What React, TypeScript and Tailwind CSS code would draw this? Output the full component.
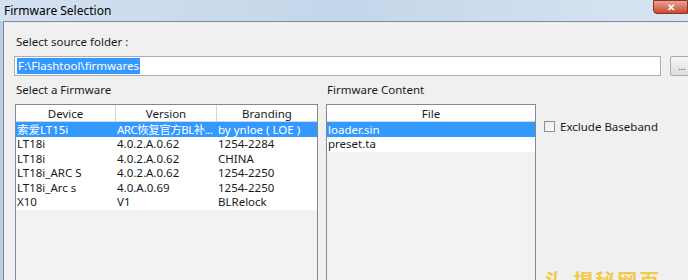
import React from "react";

const firmwares = [
  { device: "索爱LT15i", version: "ARC恢复官方BL补...", branding: "by ynloe ( LOE )" },
  { device: "LT18i", version: "4.0.2.A.0.62", branding: "1254-2284" },
  { device: "LT18i", version: "4.0.2.A.0.62", branding: "CHINA" },
  { device: "LT18i_ARC S", version: "4.0.2.A.0.62", branding: "1254-2250" },
  { device: "LT18i_Arc s", version: "4.0.A.0.69", branding: "1254-2250" },
  { device: "X10", version: "V1", branding: "BLRelock" },
];

const files = ["loader.sin", "preset.ta"];

export default function App() {
  return (
    <div
      className="relative w-[688px] h-[280px] overflow-hidden bg-[#f0f0f0] text-[11.5px] text-[#1a1a1a]"
      style={{ fontFamily: '"Noto Sans", "Noto Sans CJK SC", sans-serif' }}
    >
      {/* Title bar */}
      <div className="h-[21px] flex items-center pl-[4px] bg-gradient-to-r from-[#d3e1f0] via-[#c4d6ea] to-[#d8e5f2] text-[12px] text-black">
        Firmware Selection
      </div>
      <div className="absolute right-0 top-0 w-[35px] h-[14px] rounded-bl-[4px] bg-gradient-to-b from-[#e8a294] to-[#c9462e] border border-[#8d3324] flex items-center justify-center text-white text-[10px] font-bold leading-none">
        ✕
      </div>

      {/* Body */}
      <div className="flex h-[259px]">
        <div className="w-[3px] shrink-0 bg-[#b9cde3]" />
        <div className="flex-1 min-w-0 overflow-hidden border-l border-t border-[#7d8895] bg-[#f0f0f0] pt-[12px]">
          <div className="pl-[12px] h-[16px] leading-[16px]">Select source folder :</div>

          <div className="flex items-center mt-[6px]">
            <div className="ml-[10px] w-[647px] shrink-0 h-[20px] border border-[#abadb3] bg-white flex items-center pl-[2px]">
              <span className="bg-[#3399ff] text-white h-[16px] leading-[16px] px-[1px]">
                F:\Flashtool\firmwares
              </span>
            </div>
            <div className="ml-[9px] w-[24px] shrink-0 h-[20px] border border-[#acacac] rounded-[2px] bg-gradient-to-b from-[#f6f6f6] to-[#dddddd] flex items-center justify-center text-[9px] text-[#444] leading-none">
              ...
            </div>
          </div>

          <div className="flex mt-[6px]">
            {/* Left list */}
            <div className="ml-[11px] w-[303px] shrink-0">
              <div className="pl-[1px] h-[16px] leading-[16px]">Select a Firmware</div>
              <div className="mt-[6px] h-[200px] border border-[#828790] bg-[#f2f2f2]">
                <div className="flex h-[17px] bg-white border-b border-[#d5d5d5]">
                  <div className="w-[100px] border-r border-[#d5d5d5] text-center leading-[17px]">Device</div>
                  <div className="w-[101px] border-r border-[#d5d5d5] text-center leading-[17px]">Version</div>
                  <div className="flex-1 text-center leading-[17px]">Branding</div>
                </div>
                {firmwares.map((f, i) => (
                  <div
                    key={i}
                    className={
                      i === 0
                        ? "flex h-[15px] leading-[15px] bg-[#3399ff] text-white"
                        : "flex h-[14.5px] leading-[14.5px] bg-white"
                    }
                  >
                    <div className="w-[100px] pl-[1px] whitespace-nowrap overflow-hidden">{f.device}</div>
                    <div
                      className={
                        i === 0
                          ? "w-[101px] pl-[1px] whitespace-nowrap overflow-hidden tracking-[-0.5px]"
                          : "w-[101px] pl-[1px] whitespace-nowrap overflow-hidden"
                      }
                    >
                      {f.version}
                    </div>
                    <div className="flex-1 pl-[1px] whitespace-nowrap overflow-hidden">{f.branding}</div>
                  </div>
                ))}
              </div>
            </div>

            {/* Right list */}
            <div className="ml-[8px] w-[210px] shrink-0">
              <div className="pl-[1px] h-[16px] leading-[16px]">Firmware Content</div>
              <div className="mt-[6px] h-[200px] border border-[#828790] bg-[#f2f2f2]">
                <div className="h-[17px] bg-white border-b border-[#d5d5d5] text-center leading-[17px]">File</div>
                {files.map((f, i) => (
                  <div
                    key={f}
                    className={
                      i === 0
                        ? "h-[15px] leading-[15px] pl-[1px] bg-[#3399ff] text-white"
                        : "h-[14.5px] leading-[14.5px] pl-[1px] bg-white"
                    }
                  >
                    {f}
                  </div>
                ))}
              </div>
            </div>

            {/* Options */}
            <div className="ml-[8px] mt-[38px] flex items-start h-[14px] shrink-0">
              <div className="w-[11px] h-[11px] mt-[1px] border border-[#8e8f8f] bg-gradient-to-br from-[#e9e9e9] to-white" />
              <span className="ml-[5px] leading-[13px] whitespace-nowrap">Exclude Baseband</span>
            </div>
          </div>
        </div>
      </div>

      {/* watermark fragment */}
      <div className="absolute left-[544px] top-[272px] text-[20px] font-bold text-[#f3c94a] whitespace-nowrap leading-none tracking-[2px]">
        头 揭秘网页
      </div>
    </div>
  );
}
